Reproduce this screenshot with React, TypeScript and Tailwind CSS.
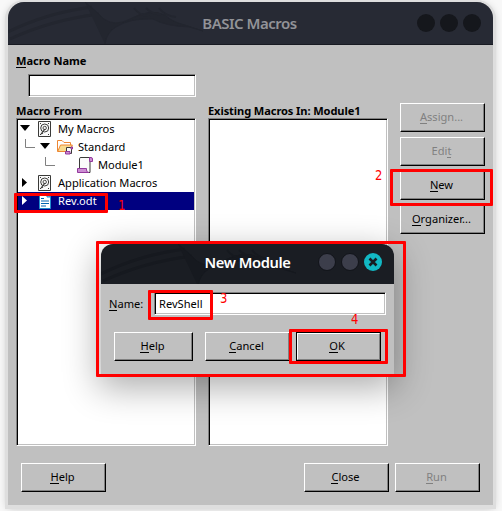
import React from "react";

const raised =
  "relative flex shrink-0 items-center justify-center border-t border-l border-t-white border-l-white border-r border-b border-r-black border-b-black shadow-[inset_-1px_-1px_0_#808080] bg-[#c0c0c0]";
const sunken =
  "relative border border-t-[#808080] border-l-[#808080] border-r-white border-b-white bg-white shadow-[inset_1px_1px_0_#000,inset_-1px_-1px_0_#c0c0c0]";

function Hot({ text, at = 0 }: { text: string; at?: number }) {
  return (
    <span className="whitespace-pre">
      {text.slice(0, at)}
      <span className="border-b border-current inline-block leading-[13px]">{text[at]}</span>
      {text.slice(at + 1)}
    </span>
  );
}

function Button({ text, at = 0, disabled = false, size = "w-[85px]" }: { text: string; at?: number; disabled?: boolean; size?: string }) {
  return (
    <button className={`${raised} h-[29px] pb-[2px] pr-[2px] ${size} ${disabled ? "text-[#808080]" : "text-black"}`}>
      <Hot text={text} at={at} />
    </button>
  );
}

function Dragon({ color }: { color: string }) {
  return (
    <svg className="absolute left-0 top-0 h-[42px] w-[220px]" viewBox="0 0 220 42" fill="none" stroke={color}>
      <path d="M0 30Q38 11 84 5M2 37Q43 18 91 12" strokeWidth="3" />
      <path d="M77 0Q89 10 96 17Q107 25 122 17Q142 6 157 13Q164 20 177 23L195 29L181 25Q157 24 145 17Q122 16 108 25Q99 30 97 42" fill={color} strokeWidth="1" />
      <path d="M126 6Q133 15 142 14M138 6Q145 13 153 12M151 6Q157 14 168 15" strokeWidth="2" />
    </svg>
  );
}

function Down() {
  return <svg className="relative -top-px h-[6px] w-[10px] shrink-0" viewBox="0 0 10 6"><path d="M0 0H10L5 6Z" /></svg>;
}
function Right({ color = "#000" }: { color?: string }) {
  return <svg className="relative -top-px h-[9px] w-[5px] shrink-0" viewBox="0 0 5 9"><path d="M0 0L5 4.5L0 9Z" fill={color} /></svg>;
}
function Branch() {
  return <svg className="relative -top-1 h-[9px] w-[10px] shrink-0" viewBox="0 0 10 9"><path d="M.5 0V8.5H10" fill="none" stroke="#808080" /></svg>;
}
function Library() {
  return (
    <svg className="h-4 w-[13px] shrink-0" viewBox="0 0 13 16" fill="none" stroke="#3a3a38">
      <path d="M.5.5H12.5V15.5H.5Z" fill="#fafafa" />
      <circle cx="6.7" cy="7" r="4" />
      <circle cx="6.7" cy="7" r="1.7" strokeWidth=".9" />
      <path d="M7 8L3 13M3 13L5 12" strokeWidth="1.2" />
      <path d="M2 2.5H3M10 2.5H11M2 13.5H3M10 13.5H11" />
    </svg>
  );
}
function Folder() {
  return (
    <svg className="h-4 w-4 shrink-0" viewBox="0 0 16 16">
      <path d="M.5 12.5V1.5H5L7 3.5H13.5V6" fill="#fff" stroke="#ed8733" />
      <path d="M.7 12.5L3.5 6H15.3L13.5 12.5Z" fill="#f8db8f" stroke="#ed8733" />
      <path d="M9.5 8.5H14.5V14.5H9.5Z" fill="#fafafa" stroke="#3a3a38" />
      <path d="M8.5 12.5H13V15H8.5ZM14 8H15.5V10H14Z" fill="#cc8dd3" stroke="#92399c" />
    </svg>
  );
}
function Module() {
  return (
    <svg className="h-4 w-4 shrink-0" viewBox="0 0 16 16">
      <path d="M2.5 11V1.7Q2.5.5 4 .5H13V15.5H3Z" fill="#fafafa" stroke="#3a3a38" />
      <path d="M.5 11.5H9.5V13Q9.5 15.5 12 15.5H.5Z" fill="#cc8dd3" stroke="#92399c" />
      <path d="M12.5.5H14Q15.5.5 15.5 2V4.5H12.5Z" fill="#cc8dd3" stroke="#92399c" />
    </svg>
  );
}
function Doc() {
  return (
    <svg className="h-4 w-3 shrink-0" viewBox="0 0 12 16">
      <path d="M.5.5H8L11.5 4V15.5H.5Z" fill="#fff" stroke="#1e8bcd" />
      <path d="M8 .5V4H11.5Z" fill="#83beec" stroke="#1e8bcd" />
      <path d="M2 5.5H5M2 8H10M2 10.5H10M2 13H7" stroke="#0063b1" />
    </svg>
  );
}

function Mark({ place, children }: { place: string; children: React.ReactNode }) {
  return <span className={`absolute z-20 origin-left scale-x-[.92] font-['DejaVu_Sans_Condensed','DejaVu_Sans',sans-serif] text-[14px] leading-[16px] text-[#ff0000] ${place}`}>{children}</span>;
}

export default function App() {
  return (
    <div className="relative h-[511px] w-[502px] overflow-hidden bg-[#f8f8f8] pt-[2px] pl-2 font-['Noto_Sans',sans-serif] text-[11.1px] leading-[15px] text-black">
      <main className="flex h-[503px] w-[485px] flex-col rounded-t-[16px] bg-[#c0c0c0] shadow-[0_1px_0_3px_#dedede,0_2px_8px_#aaa]">
        <header className="relative flex h-[43px] shrink-0 items-center justify-end gap-[5px] overflow-hidden rounded-t-[16px] border-b border-[#181a22] bg-[#272a34] pr-3">
          <Dragon color="#23262f" />
          <h1 className="absolute inset-x-0 top-[10px] pr-[2px] text-center text-[15px] font-semibold leading-[22px] tracking-[-0.5px] text-[#929398]">BASIC Macros</h1>
          <i className="relative size-[18px] rounded-full bg-[#15171c]" />
          <i className="relative size-[18px] rounded-full bg-[#15171c]" />
          <i className="relative size-[18px] rounded-full bg-[#15171c]" />
        </header>
        <section className="flex flex-col px-2 pt-2">
          <h2 className="h-[21px] font-bold"><Hot text="Macro Name" /></h2>
          <div className={`${sunken} ml-3 h-[23px] w-[168px]`} />
          <div className="mt-[6px] flex gap-3">
            <div className="w-[180px]">
              <h2 className="h-[15px] font-bold">Macro From</h2>
              <div className={`${sunken} h-[328px] p-px`}>
                <div className="flex h-[18px] items-center pl-[2px]"><Down /><span className="w-2" /><Library /><span className="ml-[7px] pb-[2px]">My Macros</span></div>
                <div className="flex h-[18px] items-center pl-[7px]"><Branch /><span className="w-[5px]" /><Down /><span className="w-[7px]" /><Folder /><span className="ml-[5px] pb-[2px]">Standard</span></div>
                <div className="flex h-[18px] items-center pl-[27px]"><Branch /><span className="w-[22px]" /><Module /><span className="ml-[5px] pb-[2px]">Module1</span></div>
                <div className="flex h-[18px] items-center pl-1"><Right /><span className="w-[11px]" /><Library /><span className="ml-[7px] pb-[2px]">Application Macros</span></div>
                <div className="flex h-[18px] items-center bg-[#000080] pl-1 text-white"><Right color="#fff" /><span className="w-3" /><Doc /><span className="ml-[7px] pb-[2px]">Rev.odt</span></div>
              </div>
            </div>
            <div className="w-[180px]">
              <h2 className="h-[15px] whitespace-nowrap font-bold tracking-[-0.1px]">Existing Macros In: Module1</h2>
              <div className={`${sunken} h-[328px]`} />
            </div>
            <div className="flex flex-col gap-[5px]">
              <Button text="Assign..." disabled />
              <Button text="Edit" at={3} disabled />
              <Button text="New" />
              <Button text="Organizer..." />
            </div>
          </div>
          <div className="mt-[17px] flex gap-[6px] pl-[5px]">
            <Button text="Help" />
            <span className="w-[186px]" />
            <Button text="Close" />
            <Button text="Run" disabled />
          </div>
        </section>
      </main>

      <section className="absolute left-[101px] top-[244px] z-10 h-[131px] w-[293px] rounded-t-[12px] bg-[#c0c0c0] shadow-[0_10px_35px_3px_rgba(0,0,0,.32)]">
        <header className="relative flex h-10 items-center justify-end gap-[5px] overflow-hidden rounded-t-[12px] bg-[#1a1d23] pr-3 pb-1">
          <Dragon color="#16191f" />
          <h1 className="absolute inset-x-0 top-[7px] text-center text-[14.7px] font-semibold leading-[22px] tracking-[-0.4px] text-white">New Module</h1>
          <i className="relative size-[18px] rounded-full border border-[#12141a] bg-[#3c3e4b]" />
          <i className="relative size-[18px] rounded-full border border-[#12141a] bg-[#3c3e4b]" />
          <i className="relative flex size-[18px] items-center justify-center rounded-full bg-[#12b8c4]">
            <svg className="size-[10px]" viewBox="0 0 10 10"><path d="M1.5 1.5L8.5 8.5M8.5 1.5L1.5 8.5" stroke="#171c22" strokeWidth="2.6" /></svg>
          </i>
        </header>
        <div className="flex items-center pl-2 pt-2">
          <label className="w-[45px]"><Hot text="Name:" /></label>
          <div className={`${sunken} flex h-[23px] w-[232px] items-center pl-1`}>RevShell</div>
        </div>
        <div className="flex pl-[13px] pt-[17px]">
          <Button text="Help" size="w-[79px]" />
          <span className="w-3" />
          <Button text="Cancel" />
          <button className={`${raised} ml-[6px] h-[29px] w-[85px] pb-[2px] pr-[3px] outline outline-black -outline-offset-1`}>
            <span className="absolute inset-0 border border-t-white border-l-white border-r-[#808080] border-b-[#808080]" />
            <Hot text="OK" />
          </button>
        </div>
      </section>

      <div className="absolute left-[14px] top-[193px] z-20 h-5 w-[94px] rounded-[1px] border-3 border-[#ff0000]" />
      <div className="absolute left-[390px] top-[169px] z-20 h-[37px] w-[103px] rounded-[1px] border-3 border-[#ff0000]" />
      <div className="absolute left-[96px] top-[241px] z-20 h-[136px] w-[310px] rounded-[1px] border-3 border-[#ff0000]" />
      <div className="absolute left-[148px] top-[290px] z-20 h-[30px] w-[65px] rounded-[1px] border-3 border-[#ff0000]" />
      <div className="absolute left-[289px] top-[329px] z-20 h-[35px] w-[99px] rounded-[1px] border-3 border-[#ff0000]" />
      <Mark place="left-[118px] top-[197px]">1</Mark>
      <Mark place="left-[375px] top-[167px]">2</Mark>
      <Mark place="left-[220px] top-[290px]">3</Mark>
      <Mark place="left-[351px] top-[311px]">4</Mark>
    </div>
  );
}
